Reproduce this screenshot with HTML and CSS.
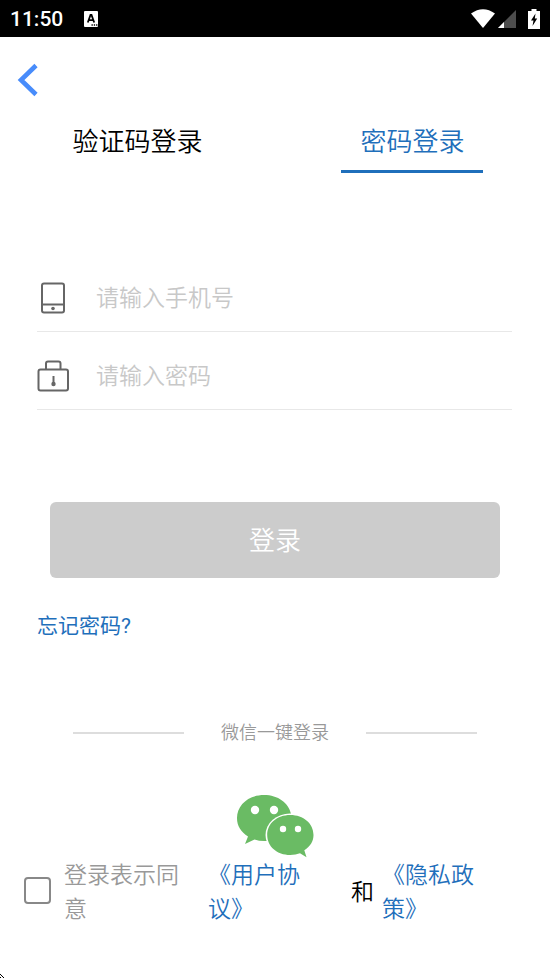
FILE: index.html
```html
<!DOCTYPE html>
<html lang="zh-CN">
<head>
<meta charset="utf-8">
<meta name="viewport" content="width=device-width, initial-scale=1">
<title>密码登录</title>
<link rel="stylesheet" href="styles.css">
</head>
<body>
<header class="status">
  <span class="clock">11:50</span>
  <svg class="status-app" width="14" height="16" viewBox="0 0 14 16" aria-hidden="true">
    <rect width="14" height="16" rx="1" fill="#fff"/>
    <path d="M3.800 11.500 6.500 4h1l2.700 7.500M5 9.200h4" fill="none" stroke="#000" stroke-width="1.800"/>
    <path d="M7.500 14h1.300m1 0h1.300m1 0h1.300" stroke="#000" stroke-width="1.300"/>
  </svg>
  <span class="status-icons">
    <svg width="24" height="20" viewBox="0 0 24 20" aria-hidden="true"><path d="M0 4.500Q12-4 24 4.500L12 19Z" fill="#fff"/></svg>
    <svg width="18" height="18" viewBox="0 0 18 18" aria-hidden="true"><path d="M18 0v18H0Z" fill="#4d4d4d"/><path d="M6 12v6H0Z" fill="#fff"/></svg>
    <svg class="battery" width="12" height="20" viewBox="0 0 12 20" aria-hidden="true"><path d="M3.500 0h5v2H12v18H0V2h3.500Z" fill="#fff"/><path d="M7.500 4.500 3 11.500h2.500L4.500 17 9.200 9.500H6.800Z" fill="#000"/></svg>
  </span>
</header>
<main>
  <button class="back" type="button" aria-label="返回">
    <svg width="20" height="32" viewBox="0 0 20 32" aria-hidden="true"><path d="M18 1.500 3 16l15 14.500" fill="none" stroke="#488cfb" stroke-width="4.600"/></svg>
  </button>
  <nav class="tabs">
    <button class="tab" type="button">验证码登录</button>
    <button class="tab active" type="button">密码登录</button>
  </nav>
  <form>
    <div class="fields">
      <div class="field">
        <label for="phone" aria-label="手机号">
          <svg width="32" height="32" viewBox="0 0 32 32" aria-hidden="true" fill="none" stroke="#666" stroke-width="2"><rect x="5" y="1.500" width="22" height="29" rx="2"/><path d="M5 22.500h22"/><circle cx="16" cy="26.500" r="1.800" fill="#666" stroke="none"/></svg>
        </label>
        <input id="phone" type="tel" placeholder="请输入手机号">
      </div>
      <div class="field">
        <label for="password" aria-label="密码">
          <svg width="32" height="32" viewBox="0 0 32 32" aria-hidden="true" fill="none" stroke="#666" stroke-width="2"><rect x="1.500" y="9.500" width="29.500" height="21" rx="2"/><path d="M9 9V3.500q0-2 2-2h10.500q2 0 2 2V9"/><path d="M16.500 16v8"/><circle cx="16.500" cy="24" r="2.200" fill="#666" stroke="none"/></svg>
        </label>
        <input id="password" type="password" placeholder="请输入密码">
      </div>
    </div>
    <button class="submit" type="submit">登录</button>
    <a class="forgot" href="#forgot">忘记密码?</a>
    <div class="divider"><span>微信一键登录</span></div>
    <button class="wechat" type="button" aria-label="微信登录">
      <svg width="78" height="62" viewBox="0 0 78 62" aria-hidden="true">
        <path d="M28 1C12.500 1 1 11 1 24c0 8 4 14 11 18.500L9 50l9.500-4.500Q24 47.500 31 47L55 20C53 9 42 1 28 1Z" fill="#6abb64"/>
        <ellipse cx="54" cy="41" rx="24.500" ry="21.500" fill="#fff"/>
        <path d="M54.200 21C41 21 31.200 29.500 31.200 41s9.800 20 23 20q5.500 0 9.800-1.800l6.500 4-2.200-7C74.500 52.500 77.500 47 77.500 41c0-11.500-10-20-23.300-20Z" fill="#6abb64"/>
        <g fill="#fff"><circle cx="19" cy="16" r="4.200"/><circle cx="38" cy="16" r="4.200"/><circle cx="47" cy="35" r="3.200"/><circle cx="62" cy="35" r="3.200"/></g>
      </svg>
    </button>
    <div class="terms">
      <input id="agree" type="checkbox">
      <label for="agree">登录表示同意</label>
      <a class="agreement" href="#agreement">《用户协议》</a>
      <span class="and">和</span>
      <a class="privacy" href="#privacy">《隐私政策》</a>
    </div>
  </form>
</main>
<svg class="pointer" width="4" height="5" viewBox="0 0 4 5" aria-hidden="true"><path d="M0 .5h1M1 1.500h1M2 2.500h1M0 3.500h1M3 3.500h1" stroke="#000"/></svg>
</body>
</html>
```
FILE: styles.css
```css
* { box-sizing: border-box; }
body {
  margin: 0;
  min-height: 100vh;
  background: #fff;
  color: #000;
  font-family: "Noto Sans CJK SC", sans-serif;
  font-weight: 350;
}
svg { display: block; overflow: visible; }
button, input { font: inherit; }
button { padding: 0; border: 0; background: none; color: inherit; }
a { color: #1f6fbb; text-decoration: none; }
.status {
  display: flex;
  align-items: center;
  height: 37px;
  padding: 0 10px;
  background: #000;
  color: #fff;
}
.clock { font: 500 21px/36px Roboto, sans-serif; }
.status-app { margin-left: 21px; }
.status-icons { display: flex; align-items: center; gap: 3px; margin-left: auto; }
.battery { margin-left: 9px; }
.back { display: block; padding: 27px 18px 0; }
.tabs { display: flex; margin-top: 21px; }
.tab { position: relative; flex: 1; height: 56px; font-size: 26px; line-height: 44px; padding-bottom: 10px; }
.active { color: #1f6fbb; }
.active::after {
  content: "";
  position: absolute;
  left: 50%;
  bottom: 0;
  width: 142px;
  height: 3px;
  margin-left: -72px;
  background: #1f6fbb;
}
.fields { padding: 81px 38px 0 37px; }
.field { display: flex; align-items: center; gap: 26px; height: 78px; padding-top: 10px; border-bottom: 1px solid #e8e8e8; }
.field input { flex: 1; min-width: 0; padding: 0 1px 4px; border: 0; outline: 0; background: none; font-size: 23px; height: 40px; }
.field input::placeholder { color: #c8c8c8; opacity: 1; }
.submit {
  display: block;
  width: calc(100% - 100px);
  height: 76px;
  margin: 92px 50px 0;
  padding-bottom: 4px;
  border-radius: 6px;
  background: #ccc;
  color: #fff;
  font-size: 26px;
}
.forgot { display: block; width: fit-content; margin: 32px 37px 0; font-family: Roboto, "Noto Sans CJK SC", sans-serif; font-size: 21px; font-weight: 400; line-height: 32px; }
.divider {
  display: flex;
  align-items: center;
  gap: 37px;
  margin: 74px 73px 0;
  color: #999;
  font-size: 18px;
  line-height: 30px;
}
.divider span { padding-bottom: 4px; }
.divider::before, .divider::after { content: ""; flex: 1; height: 2px; background: #ddd; }
.wechat { display: block; margin: 44px auto 0; }
.terms { display: flex; align-items: center; padding: 0 24px; font-size: 23px; line-height: 34px; }
.terms label { width: 120px; margin-left: 13px; color: #999; }
.terms input {
  appearance: none;
  flex: none;
  width: 27px;
  height: 27px;
  margin: 0;
  border: 2px solid #888;
  border-radius: 4px;
}
.terms input:checked { background: #1f6fbb; }
.agreement { width: 110px; margin-left: 24px; }
.and { margin-left: 33px; }
.privacy { width: 110px; margin-left: 8px; }
.pointer { position: fixed; left: 0; bottom: 0; }
```
